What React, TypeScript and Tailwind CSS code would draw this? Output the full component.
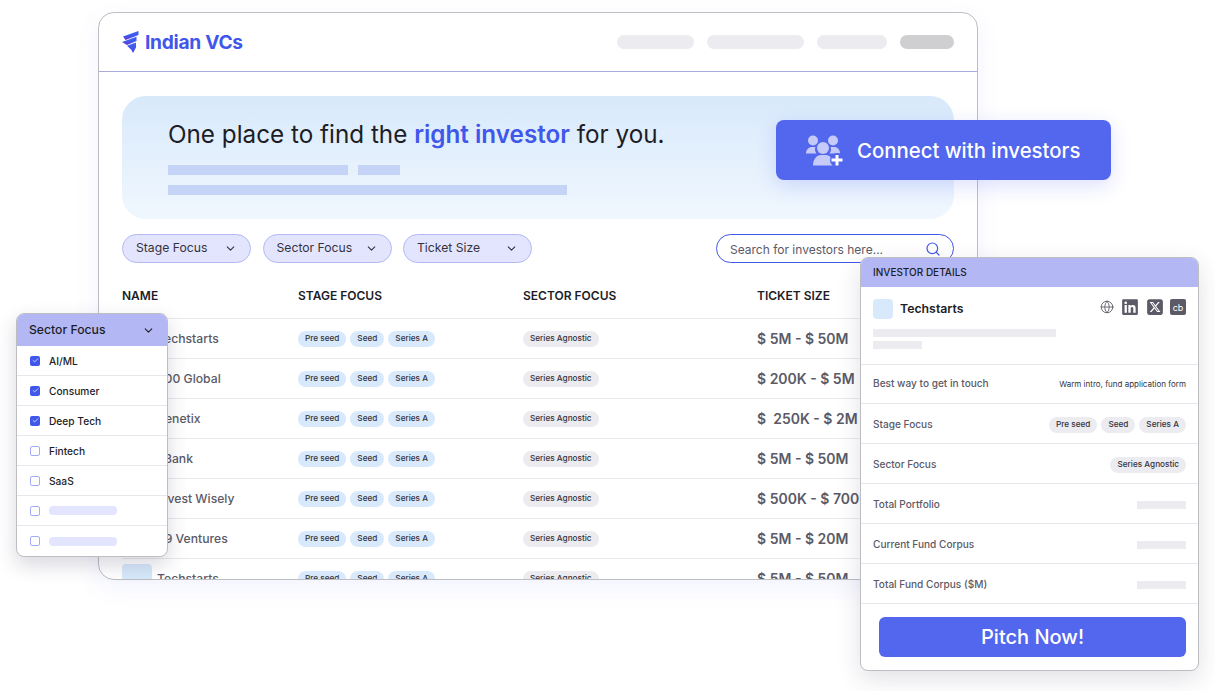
import { ChevronDown, Check, Globe, Search } from "lucide-react";
import { FaLinkedin } from "react-icons/fa";
import { FaSquareXTwitter } from "react-icons/fa6";

const investors = [
  { name: "Techstarts", ticket: "$ 5M - $ 50M" },
  { name: "500 Global", ticket: "$ 200K - $ 5M" },
  { name: "Kenetix", ticket: "$  250K - $ 2M" },
  { name: "LBank", ticket: "$ 5M - $ 50M" },
  { name: "Invest Wisely", ticket: "$ 500K - $ 700K" },
  { name: "99 Ventures", ticket: "$ 5M - $ 20M" },
  { name: "Techstarts", ticket: "$ 5M - $ 50M" },
];

const sectors = [
  { label: "AI/ML", checked: true },
  { label: "Consumer", checked: true },
  { label: "Deep Tech", checked: true },
  { label: "Fintech", checked: false },
  { label: "SaaS", checked: false },
  { label: "", checked: false },
  { label: "", checked: false },
];

function Logo() {
  return (
    <svg width="17" height="22" viewBox="0 0 17 22">
      <defs>
        <linearGradient id="logo-grad" x1="0" y1="0" x2="0" y2="1">
          <stop offset="0" stopColor="#3f63f0" />
          <stop offset="0.6" stopColor="#3f57ea" />
          <stop offset="1" stopColor="#6a2bd2" />
        </linearGradient>
      </defs>
      <path d="M1 5.500 16.500 0V4L3.500 9Z" fill="url(#logo-grad)" />
      <path d="M0 11 14.500 5.800V10L5 14Z" fill="url(#logo-grad)" />
      <path d="M5 14.800 14 11.500V16.500L11 22 9.500 19Z" fill="url(#logo-grad)" />
    </svg>
  );
}

function UsersPlus() {
  return (
    <svg width="37" height="31" viewBox="0 0 37 31" fill="#c5caf8">
      <circle cx="7" cy="5.500" r="5" />
      <circle cx="27" cy="5.500" r="5" />
      <path d="M0 18.500c0-4 3-6.500 6-6.500h3.500c-1 2-.5 4.500 1 6.500Z" />
      <path d="M24.500 12h3.500c3.500 0 6 2.500 6 6.500h-10.500c1.500-2 2-4.500 1-6.500Z" />
      <circle cx="17" cy="13" r="6" />
      <path d="M7 30.500c0-6 3.500-10.500 8-10.500h5c4 0 7 4 7 10.500Z" />
      <circle cx="31" cy="25" r="7" fill="#5366ee" />
      <path d="M29.500 20h3v3.500h4v3h-4v4h-3v-4h-4v-3h4Z" fill="#ffffff" />
    </svg>
  );
}

function Pill({ children, grey = false }: { children: string; grey?: boolean }) {
  return (
    <span
      className={`flex h-4 items-center rounded-full px-[7px] text-[8.200px] font-medium text-[#33333d] ${
        grey ? "bg-[#ecebf0]" : "bg-[#d8e9fb]"
      }`}
    >
      {children}
    </span>
  );
}

function Filter({ label }: { label: string }) {
  return (
    <button className="flex h-[29px] w-[129px] items-center justify-between rounded-full border border-[#b3b8f5] bg-[#e3e5fe] px-[13px] text-[12.200px] text-[#33333d]">
      {label}
      <ChevronDown size={13} strokeWidth={2} />
    </button>
  );
}

function DetailRow({ label, children, short = false }: { label: string; children?: React.ReactNode; short?: boolean }) {
  return (
    <div className={`flex items-center justify-between border-b border-[#e8e8ec] px-3 ${short ? "h-[39px]" : "h-10 pt-0.5"}`}>
      <span className="text-[10.100px] font-medium text-[#5b5a66]">{label}</span>
      {children}
    </div>
  );
}

const Bar = () => <div className="h-2 w-[49px] bg-[#ecebf0]" />;

export default function App() {
  return (
    <div className="relative h-[691px] w-[1215px] overflow-hidden bg-white font-['Inter',sans-serif]">
      {/* Browser window */}
      <div className="absolute left-[98px] top-3 h-[568px] w-[880px] overflow-hidden rounded-2xl border border-[#bdbdc2] bg-white shadow-[0_8px_24px_rgba(83,102,238,0.08)]">
        <header className="flex h-[59px] items-center justify-between border-b border-[#a9a9dd] px-[23px]">
          <div className="flex items-center gap-[6px]">
            <Logo />
            <span className="text-[19.200px] font-bold tracking-[-0.3px] text-[#3f57ea]">Indian VCs</span>
          </div>
          <div className="flex gap-[13px]">
            <div className="h-3.5 w-[77px] rounded-full bg-[#ecebf0]" />
            <div className="h-3.5 w-[97px] rounded-full bg-[#ecebf0]" />
            <div className="h-3.5 w-[70px] rounded-full bg-[#ecebf0]" />
            <div className="h-3.5 w-[54px] rounded-full bg-[#cfcfd2]" />
          </div>
        </header>

        <div className="px-[23px] pt-6">
          <section className="h-[123px] w-[832px] rounded-3xl bg-gradient-to-b from-[#d8e9fb] to-[#f0f7fe] pl-[46px] pt-[24px]">
            <h1 className="text-[24.250px] leading-[30px] text-[#1d1d26]">
              One place to find the <span className="font-semibold text-[#3f57ea]">right investor</span> for you.
            </h1>
            <div className="mt-[15px] flex gap-2.5">
              <div className="h-2.5 w-[180px] bg-[#c5d3f7]" />
              <div className="h-2.5 w-[42px] bg-[#c5d3f7]" />
            </div>
            <div className="mt-2.5 h-2.5 w-[399px] bg-[#c5d3f7]" />
          </section>

          <div className="mt-[15px] flex w-[832px] items-center">
            <div className="flex gap-[11.500px]">
              <Filter label="Stage Focus" />
              <Filter label="Sector Focus" />
              <Filter label="Ticket Size" />
            </div>
            <div className="ml-auto flex h-[29px] w-[238px] items-center justify-between rounded-full border border-[#3f57ea] pl-[13px] pr-[12px] text-[12px] text-[#5b5a66]">
              <span className="translate-y-px">Search for investors here...</span>
              <Search size={16} strokeWidth={1.8} className="text-[#3f57ea]" />
            </div>
          </div>

          <div className="mt-[13px] grid h-[43px] w-[860px] grid-cols-[176px_225px_234px_1fr] items-center border-b border-[#e8e8ec] pb-[3px] text-[12px] font-semibold text-[#1d1d26]">
            <span>NAME</span>
            <span>STAGE FOCUS</span>
            <span>SECTOR FOCUS</span>
            <span>TICKET SIZE</span>
          </div>

          {investors.map((inv, i) => (
            <div key={i} className="grid h-10 w-[860px] grid-cols-[176px_225px_234px_1fr] items-center border-b border-[#e8e8ec]">
              <div className="flex items-center gap-[5px]">
                <div className="h-[30px] w-[30px] rounded bg-[#d8e9fb]" />
                <span className="translate-y-px text-[12.200px] font-medium text-[#5b5a66]">{inv.name}</span>
              </div>
              <div className="flex gap-1">
                <Pill>Pre seed</Pill>
                <Pill>Seed</Pill>
                <Pill>Series A</Pill>
              </div>
              <div className="flex">
                <Pill grey>Series Agnostic</Pill>
              </div>
              <span className="whitespace-pre text-[14px] font-semibold text-[#5b5a66]">{inv.ticket}</span>
            </div>
          ))}
        </div>
      </div>

      {/* Connect callout */}
      <div className="absolute left-[776px] top-[120px] flex h-[60px] w-[335px] items-center gap-[14px] rounded-lg bg-[#5366ee] pl-[30px] text-[20.350px] font-medium text-white shadow-[0_6px_20px_rgba(83,102,238,0.2)]">
        <UsersPlus />
        <span className="translate-y-px">Connect with investors</span>
      </div>

      {/* Sector dropdown */}
      <div className="absolute left-4 top-[313px] w-[152px] overflow-hidden rounded-lg border border-[#bdbdc2] bg-white shadow-[0_8px_20px_rgba(40,40,80,0.18)]">
        <div className="flex h-[32px] items-center justify-between bg-[#b3b8f5] px-3 text-[12.200px] font-medium text-[#1d1d26]">
          Sector Focus
          <ChevronDown size={13} strokeWidth={2} />
        </div>
        {sectors.map((s, i) => (
          <div key={i} className="flex h-[30px] items-center gap-[9px] border-b border-[#e8e8ec] pl-[13px] last:border-b-0">
            {s.checked ? (
              <span className="flex h-2.5 w-2.5 items-center justify-center rounded-[2px] bg-[#3f57ea] text-white">
                <Check size={7} strokeWidth={2.500} />
              </span>
            ) : (
              <span className="h-2.5 w-2.5 rounded-[2px] border border-[#a5acf5] bg-white" />
            )}
            {s.label ? (
              <span className="translate-y-px text-[10.200px] font-medium text-[#1d1d26]">{s.label}</span>
            ) : (
              <div className="h-[9px] w-[68px] rounded-sm bg-[#e3e5fe]" />
            )}
          </div>
        ))}
      </div>

      {/* Investor details */}
      <div className="absolute left-[860px] top-[257px] h-[414px] w-[339px] overflow-hidden rounded-lg border border-[#bdbdc2] bg-white shadow-[0_8px_24px_rgba(40,40,80,0.14)]">
        <div className="flex h-[29px] items-center bg-[#b3b8f5] px-3 text-[10px] font-medium text-[#1d1d26]">INVESTOR DETAILS</div>
        <div className="h-[78px] border-b border-[#e8e8ec] px-3 pt-3">
          <div className="flex h-5 items-center">
            <div className="h-5 w-5 rounded bg-[#d8e9fb]" />
            <span className="ml-[7px] text-[12.300px] font-semibold text-[#1d1d26]">Techstarts</span>
            <div className="ml-auto flex -translate-y-0.5 items-center gap-[7px] text-[#5b5a66]">
              <Globe size={14} strokeWidth={1.5} />
              <FaLinkedin size={18} />
              <FaSquareXTwitter size={18} />
              <span className="-ml-px flex h-4 w-4 items-center justify-center rounded-[2px] bg-[#5b5a66] text-[9px] leading-none text-white">cb</span>
            </div>
          </div>
          <div className="mt-[10px] h-2 w-[183px] bg-[#ecebf0]" />
          <div className="mt-1 h-2 w-[49px] bg-[#ecebf0]" />
        </div>
        <DetailRow label="Best way to get in touch" short>
          <span className="text-[8px] text-[#33333d]">Warm intro, fund application form</span>
        </DetailRow>
        <DetailRow label="Stage Focus">
          <div className="flex gap-1">
            <Pill grey>Pre seed</Pill>
            <Pill grey>Seed</Pill>
            <Pill grey>Series A</Pill>
          </div>
        </DetailRow>
        <DetailRow label="Sector Focus">
          <Pill grey>Series Agnostic</Pill>
        </DetailRow>
        <DetailRow label="Total Portfolio">
          <Bar />
        </DetailRow>
        <DetailRow label="Current Fund Corpus">
          <Bar />
        </DetailRow>
        <DetailRow label="Total Fund Corpus ($M)">
          <Bar />
        </DetailRow>
        <div className="flex justify-end px-3 pt-[13px]">
          <button className="h-10 w-[307px] rounded-md bg-[#5366ee] text-[20px] font-medium text-white">Pitch Now!</button>
        </div>
      </div>
    </div>
  );
}
